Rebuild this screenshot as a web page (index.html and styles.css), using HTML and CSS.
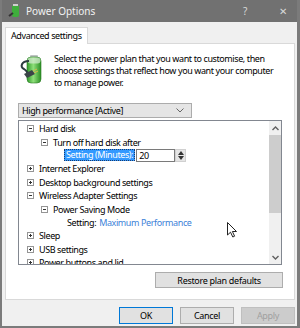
FILE: index.html
```html
<!DOCTYPE html>
<html lang="en">
<head>
  <meta charset="UTF-8" />
  <title>Power Options</title>
  <link rel="stylesheet" href="styles.css">
</head>
<body>
  <div class="window">
    <header class="titlebar">
      <svg class="title-icon" width="12" height="14" viewBox="0 0 12 14">
        <rect x="4" y="1" width="7" height="12" rx="2" fill="#3fae3c"/>
        <rect x="5" y="0" width="5" height="2" fill="#cfcfcf"/>
        <path d="M5 9 L1 12" stroke="#333" stroke-width="2"/>
      </svg>
      <div class="title-text">Power Options</div>
      <div class="title-help">?</div>
      <div class="title-close">&#x2715;</div>
    </header>
    <div class="content">
      <div class="tabs">
        <div class="tab active">Advanced settings</div>
      </div>
      <div class="panel">
        <div class="intro">
          <svg class="intro-icon" width="24" height="32" viewBox="0 0 24 32">
            <defs>
              <linearGradient id="bat" x1="0" x2="1" y1="0" y2="0">
                <stop offset="0" stop-color="#2f9a2a"/>
                <stop offset="0.45" stop-color="#8fe07a"/>
                <stop offset="1" stop-color="#2a8f24"/>
              </linearGradient>
            </defs>
            <rect x="11" y="2" width="8" height="3" rx="1" fill="#bfc4c4"/>
            <rect x="8" y="4" width="14" height="26" rx="4" fill="url(#bat)" stroke="#2a7a24" stroke-width="0.6"/>
            <rect x="8.5" y="4.5" width="13" height="6" rx="3" fill="#d8ecd6" opacity="0.7"/>
            <path d="M10 8 C2 8 1 14 5 16 C8 18 9 20 8 22" fill="none" stroke="#2c3a40" stroke-width="2"/>
            <path d="M5 21 L13 17 L16 21 L8 25 Z" fill="#3b4448"/>
            <path d="M14 18 L18 16 M15 20 L19 18" stroke="#d9b84a" stroke-width="1"/>
          </svg>
          <p class="intro-text">Select the power plan that you want to customise, then choose settings that reflect how you want your computer to manage power.</p>
        </div>
        <div class="select">
          <span>High performance [Active]</span>
          <svg width="8" height="5" viewBox="0 0 8 5"><path d="M0.5 0.5 L4 4 L7.5 0.5" fill="none" stroke="#666" stroke-width="1"/></svg>
        </div>
        <div class="tree-box">
          <div class="tree">
            <div class="row lvl0"><span class="box minus"></span>Hard disk</div>
            <div class="row lvl1"><span class="box minus"></span>Turn off hard disk after</div>
            <div class="row lvl2">
              <span class="selected">Setting (Minutes):</span>
              <span class="spin-input">20</span>
              <span class="spin">
                <svg width="6" height="4" viewBox="0 0 6 4"><path d="M0 4 L3 0 L6 4 Z" fill="#333"/></svg>
                <svg width="6" height="4" viewBox="0 0 6 4"><path d="M0 0 L3 4 L6 0 Z" fill="#333"/></svg>
              </span>
            </div>
            <div class="row lvl0"><span class="box plus"></span>Internet Explorer</div>
            <div class="row lvl0"><span class="box plus"></span>Desktop background settings</div>
            <div class="row lvl0"><span class="box minus"></span>Wireless Adapter Settings</div>
            <div class="row lvl1"><span class="box minus"></span>Power Saving Mode</div>
            <div class="row lvl2 plain">Setting: <span class="link">Maximum Performance</span></div>
            <div class="row lvl0"><span class="box plus"></span>Sleep</div>
            <div class="row lvl0"><span class="box plus"></span>USB settings</div>
            <div class="row lvl0"><span class="box plus"></span>Power buttons and lid</div>
          </div>
          <div class="scrollbar">
            <svg width="7" height="5" viewBox="0 0 7 5"><path d="M0.5 4 L3.5 1 L6.5 4" fill="none" stroke="#606060" stroke-width="1.4"/></svg>
            <div class="thumb"></div>
            <div class="track"></div>
            <svg width="7" height="5" viewBox="0 0 7 5"><path d="M0.5 1 L3.5 4 L6.5 1" fill="none" stroke="#606060" stroke-width="1.4"/></svg>
          </div>
        </div>
        <div class="restore-row">
          <button class="btn restore">Restore plan defaults</button>
        </div>
      </div>
      <div class="footer">
        <button class="btn default">OK</button>
        <button class="btn">Cancel</button>
        <button class="btn disabled">Apply</button>
      </div>
    </div>
    <svg class="cursor" width="11" height="16" viewBox="0 0 11 16">
      <path d="M0.5 0.5 L0.5 13 L3.5 10.2 L5.8 15 L7.6 14.2 L5.4 9.5 L9.5 9.5 Z" fill="#fff" stroke="#222" stroke-width="1"/>
    </svg>
  </div>
</body>
</html>
```

FILE: styles.css
```css
:root {
  --bg-desktop: #7b7b7b;
  --bg-title: #717171;
  --bg-window: #f0f0f0;
  --bg-white: #ffffff;
  --border-light: #d9d9d9;
  --border-tree: #828790;
  --btn-bg: #e1e1e1;
  --btn-border: #adadad;
  --focus: #0078d7;
  --select: #3399ff;
  --link: #3c82d8;
  --text: #000000;
  --font-ui: "Noto Sans", "Open Sans", sans-serif;
}
html, body {
  margin: 0;
  background: var(--bg-desktop);
}
body {
  width: 300px;
  height: 328px;
  overflow: hidden;
  font-family: var(--font-ui);
  font-size: 9px;
  letter-spacing: -0.4px;
  color: var(--text);
}
.window {
  position: relative;
  margin-left: 2px;
  width: 295px;
  height: 326px;
  background: var(--bg-window);
  display: flex;
  flex-direction: column;
}
.titlebar {
  height: 22px;
  background: var(--bg-title);
  display: flex;
  align-items: center;
  color: #f2f2f2;
  font-size: 10px;
  letter-spacing: 0;
}
.title-icon {
  margin-left: 6px;
  margin-right: 6px;
}
.title-text {
  flex: 1;
}
.title-help {
  width: 14px;
  margin-right: 22px;
  color: #d8d8d8;
}
.title-close {
  width: 14px;
  margin-right: 4px;
  color: #d8d8d8;
}
.content {
  flex: 1;
  padding: 5px 2px 0 3px;
  display: flex;
  flex-direction: column;
}
.tabs {
  display: flex;
  height: 16px;
}
.tab {
  padding: 0 5px;
  line-height: 16px;
  background: var(--bg-white);
  border: 1px solid var(--border-light);
  border-bottom: none;
  margin-bottom: -1px;
  position: relative;
  z-index: 1;
}
.panel {
  height: 255px;
  background: var(--bg-white);
  border: 1px solid var(--border-light);
  padding: 0 12px 0 12px;
  display: flex;
  flex-direction: column;
}
.intro {
  display: flex;
  gap: 9px;
  padding-top: 9px;
  height: 49px;
}
.intro-icon {
  flex: none;
  margin-left: 1px;
}
.intro-text {
  margin: 0 0 0 2px;
  line-height: 12px;
}
.select {
  height: 15px;
  margin-top: 1px;
  background: #e5e5e5;
  border: 1px solid #acacac;
  width: 174px;
  display: flex;
  align-items: center;
  justify-content: space-between;
  padding: 0 7px 0 3px;
  box-sizing: border-box;
}
.tree-box {
  margin-top: 2px;
  height: 145px;
  border: 1px solid var(--border-tree);
  display: flex;
  box-sizing: border-box;
  overflow: hidden;
}
.tree {
  flex: 1;
  padding-top: 1px;
}
.row {
  height: 13.4px;
  display: flex;
  align-items: center;
  white-space: nowrap;
}
.lvl0 { padding-left: 8px; }
.lvl1 { padding-left: 22px; }
.lvl2 { padding-left: 45px; }
.lvl2.plain { padding-left: 48px; }
.box {
  width: 5px;
  height: 5px;
  border: 1px solid #959595;
  margin-right: 5px;
  position: relative;
  flex: none;
}
.box::before {
  content: "";
  position: absolute;
  left: 1px;
  top: 2px;
  width: 3px;
  height: 1px;
  background: #333;
}
.box.plus::after {
  content: "";
  position: absolute;
  left: 2px;
  top: 1px;
  width: 1px;
  height: 3px;
  background: #333;
}
.selected {
  background: var(--select);
  color: #fff;
  outline: 1px dotted #1a3c6e;
  outline-offset: -1px;
  padding: 0 2px;
  line-height: 12px;
}
.spin-input {
  width: 35px;
  height: 11px;
  border: 1px solid #7a7a7a;
  line-height: 11px;
  padding-left: 2px;
  margin-left: 1px;
}
.spin {
  width: 11px;
  height: 13px;
  background: #e5e5e5;
  border: 1px solid #d0d0d0;
  box-sizing: border-box;
  display: flex;
  flex-direction: column;
  align-items: center;
  justify-content: center;
  gap: 1px;
}
.link {
  color: var(--link);
  margin-left: 3px;
}
.scrollbar {
  width: 12px;
  background: #f0f0f0;
  display: flex;
  flex-direction: column;
  align-items: center;
  padding: 5px 0 4px;
  box-sizing: border-box;
}
.thumb {
  width: 12px;
  height: 78px;
  margin-top: 4px;
  background: #cdcdcd;
}
.track {
  flex: 1;
}
.restore-row {
  display: flex;
  justify-content: flex-end;
  margin-top: 7px;
}
.btn {
  font-family: var(--font-ui);
  font-size: 9px;
  letter-spacing: -0.3px;
  height: 16px;
  padding: 0;
  background: var(--btn-bg);
  border: 1px solid var(--btn-border);
  color: var(--text);
}
.restore {
  width: 128px;
  margin-right: -1px;
}
.footer {
  display: flex;
  justify-content: flex-end;
  gap: 7px;
  padding-top: 7px;
}
.footer .btn {
  width: 54px;
  height: 17px;
}
.btn.default {
  border-color: var(--focus);
}
.btn.disabled {
  background: #cccccc;
  border-color: #bfbfbf;
  color: #a0a0a0;
}
.cursor {
  position: absolute;
  left: 225px;
  top: 222px;
}
```
